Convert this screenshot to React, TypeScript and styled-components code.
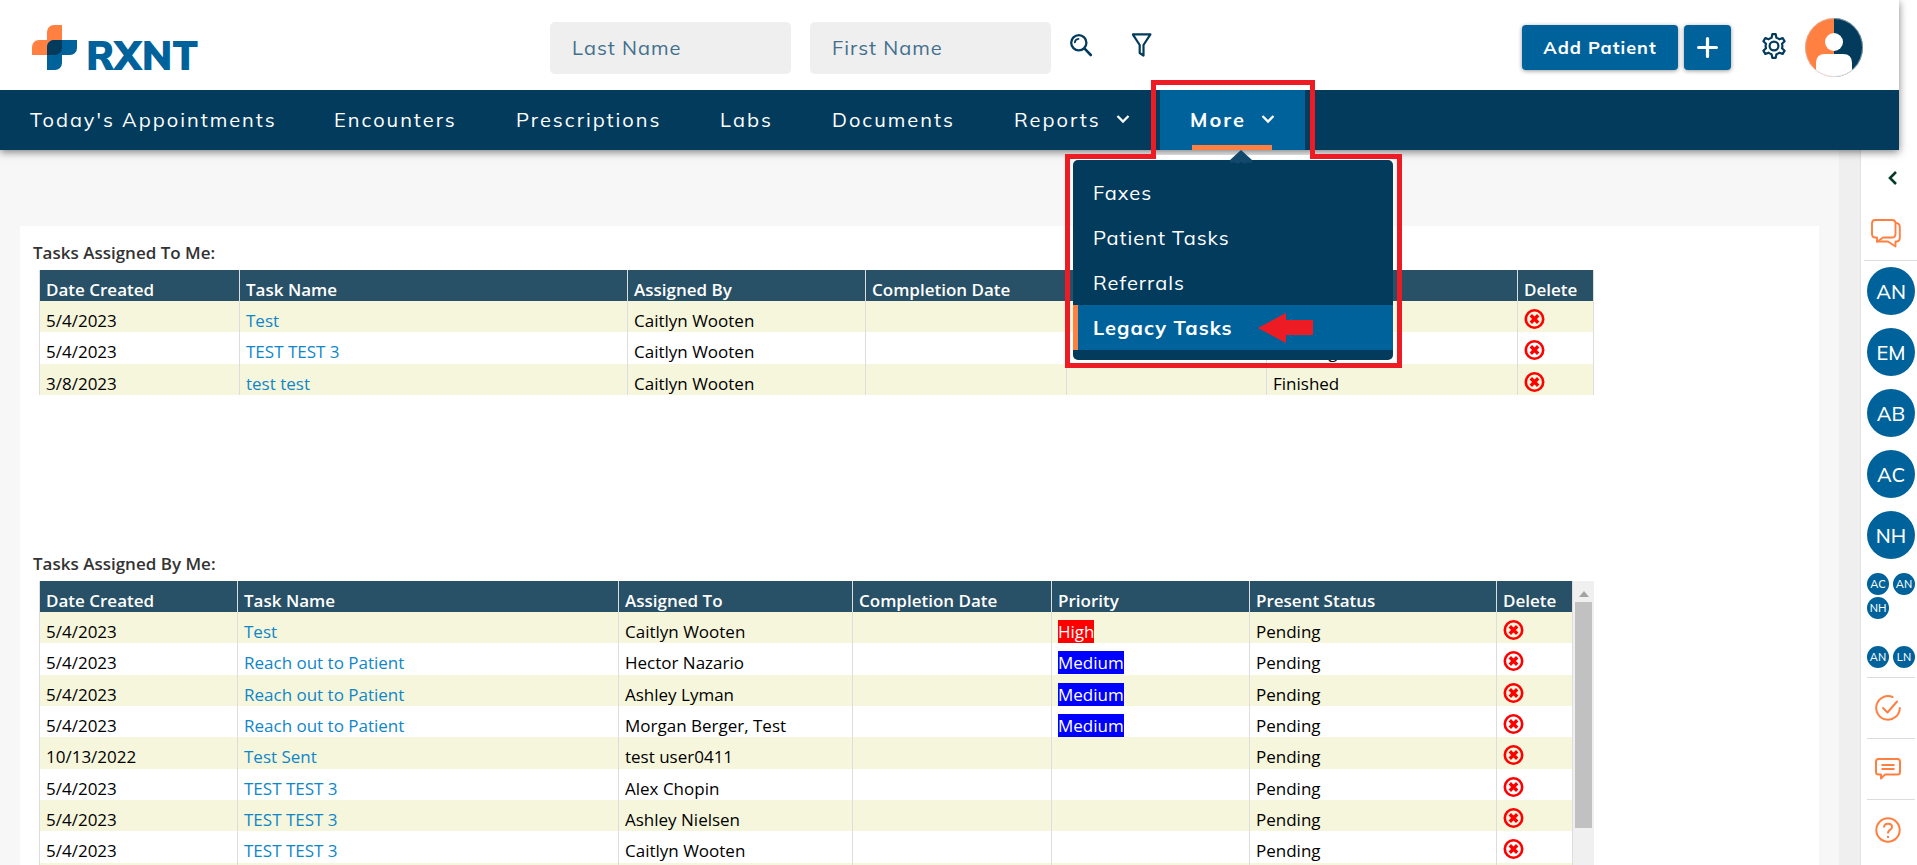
import React from "react";
import styled, { createGlobalStyle, css } from "styled-components";

const navy = "#023b5c";
const blue = "#00629b";
const orange = "#ff8041";
const red = "#ed1c24";
const uiFont = `"Mulish", "Lato", "Open Sans", sans-serif`;
const tableFont = `"Open Sans", "Noto Sans", sans-serif`;

const GlobalStyle = createGlobalStyle`
  * { box-sizing: border-box; }
  body { margin: 0; background: #fff; font-family: ${uiFont}; overflow: hidden; }
  button, input { font: inherit; }
  button { border: 0; padding: 0; background: none; cursor: pointer; }
  a { text-decoration: none; }
  svg { display: block; }
`;

const Page = styled.div`
  display: flex;
  flex-direction: column;
  height: 100vh;
  overflow: hidden;
`;

const Header = styled.header`
  position: relative;
  z-index: 2;
  margin-right: 18px;
  box-shadow: 0 2px 8px rgba(0, 0, 0, 0.5);
`;

const TopBar = styled.div`
  display: flex;
  align-items: center;
  height: 90px;
  padding-right: 36px;
  background: #fff;
`;

const Brand = styled.a`
  display: flex;
  align-items: flex-start;
  gap: 8px;
  flex: 0 0 550px;
  height: 45px;
  padding-left: 32px;
  margin-top: 5px;
  color: ${blue};
`;

const BrandName = styled.span`
  padding-top: 10px;
  font-size: 40px;
  line-height: 40px;
  font-weight: 900;
`;

const Search = styled.form`
  display: flex;
  align-items: center;
  gap: 19px;
  padding-top: 6px;
`;

const SearchInput = styled.input`
  width: 241px;
  height: 52px;
  padding: 0 22px 2px;
  border: 0;
  border-radius: 5px;
  background: #efefef;
  color: ${navy};
  font-size: 20px;
  letter-spacing: 1px;
  &::placeholder { color: #43708d; opacity: 1; }
`;

const IconButton = styled.button`
  display: flex;
  align-items: center;
  justify-content: center;
  color: ${navy};
`;

const SearchIcons = styled.div`
  display: flex;
  gap: 39px;
  padding-bottom: 6px;
`;

const Actions = styled.div`
  display: flex;
  align-items: center;
  margin-left: auto;
  padding-top: 5px;
`;

const PrimaryButton = styled.button<{ $square?: boolean }>`
  display: flex;
  align-items: center;
  justify-content: center;
  width: ${(p) => (p.$square ? 47 : 156)}px;
  height: 45px;
  margin-left: 6px;
  border-radius: 4px;
  background: ${blue};
  box-shadow: 0 1px 4px rgba(0, 0, 0, 0.4);
  color: #fff;
  font-size: 18px;
  font-weight: 700;
  letter-spacing: 1px;
`;

const GearButton = styled(IconButton)`
  margin: 0 18px 4px 30px;
`;

const Nav = styled.nav`
  display: flex;
  height: 60px;
  background: ${navy};
`;

const NavItem = styled.a<{ $width: number; $active?: boolean }>`
  position: relative;
  display: flex;
  align-items: center;
  gap: 15px;
  width: ${(p) => p.$width}px;
  padding: 0 0 2px 30px;
  color: #fff;
  font-size: 20px;
  font-weight: 400;
  letter-spacing: 2px;
  white-space: nowrap;
  ${(p) =>
    p.$active &&
    css`
      background: ${blue};
      font-weight: 700;
      &::after {
        content: "";
        position: absolute;
        left: 32px;
        bottom: 0;
        width: 80px;
        height: 5px;
        background: ${orange};
      }
    `}
`;

const MoreGroup = styled.div`
  position: relative;
  display: flex;
`;

const Menu = styled.div`
  position: absolute;
  top: 70px;
  left: -87px;
  width: 320px;
  padding: 10px 0;
  border-radius: 5px;
  background: ${navy};
  box-shadow: 0 -5px 0 #fff;
`;

const MenuItem = styled.a<{ $active?: boolean }>`
  display: flex;
  align-items: center;
  height: 45px;
  padding-left: ${(p) => (p.$active ? 15 : 20)}px;
  border-left: ${(p) => (p.$active ? `5px solid ${orange}` : "0")};
  background: ${(p) => (p.$active ? blue : "transparent")};
  color: #fff;
  font-size: 20px;
  font-weight: ${(p) => (p.$active ? 700 : 400)};
  letter-spacing: 1px;
`;

const MenuCaret = styled.svg`
  position: absolute;
  top: 60px;
  left: 69px;
`;

const Outline = styled.svg`
  position: absolute;
  top: -10px;
  left: -95px;
  pointer-events: none;
`;

const Body = styled.div`
  display: flex;
  flex: 1;
  min-height: 0;
`;

const Main = styled.main`
  flex: 1;
  min-width: 0;
  padding: 76px 20px 0;
  background: #f7f7f7;
  overflow: hidden;
`;

const PageTrack = styled.div`
  width: 22px;
  background: #efefef;
  border-right: 1px solid #e2e2e2;
`;

const Card = styled.div`
  height: 100%;
  padding: 15px 225px 0 13px;
  background: #fff;
  overflow: hidden;
`;

const Section = styled.section`
  min-height: 311px;
`;

const Title = styled.h2`
  margin: 0;
  padding-bottom: 5px;
  color: #333;
  font: 600 17px/24px ${tableFont};
`;

const TableWrap = styled.div<{ $minHeight: number }>`
  display: flex;
  min-height: ${(p) => p.$minHeight}px;
  margin-left: 6px;
`;

const Table = styled.table`
  flex: 1;
  width: 100%;
  table-layout: fixed;
  border-collapse: collapse;
  font: 400 17px/23px ${tableFont};
  color: #000;
  th, td {
    height: 31px;
    padding: 8px 6px 0;
    border: solid #ddd;
    border-width: 0 1px;
    text-align: left;
    white-space: nowrap;
    line-height: 23px;
    vertical-align: top;
  }
  th { background: #285066; color: #fff; font-weight: 600; }
  tbody tr:nth-child(odd) { background: #f6f6dc; }
`;

const TaskLink = styled.a`
  color: #0f86c8;
`;

const Priority = styled.span<{ $level: string }>`
  display: inline-block;
  background: ${(p) => (p.$level === "High" ? "#f00" : "#00f")};
  color: #fff;
`;

const DeleteButton = styled.button`
  display: block;
`;

const ScrollTrack = styled.div`
  display: flex;
  flex-direction: column;
  align-items: center;
  gap: 5px;
  width: 21px;
  padding-top: 9px;
  background: #f0f0f0;
`;

const ScrollThumb = styled.div`
  width: 17px;
  height: 226px;
  background: #c1c1c1;
`;

const Side = styled.aside`
  display: flex;
  flex-direction: column;
  align-items: center;
  width: 56px;
  padding: 0 2px 0 6px;
  background: #fff;
`;

const CollapseButton = styled(IconButton)`
  align-self: flex-end;
  margin: 21px 18px 33px 0;
`;

const SideButton = styled(IconButton)`
  width: 48px;
  height: 61px;
  padding-right: 6px;
  border-top: 1px solid #ddd;
  color: ${orange};
`;

const ChatButton = styled(IconButton)`
  align-self: flex-end;
  width: 53px;
  height: 43px;
  margin-right: -2px;
  padding: 0 9px 12px 0;
  border-bottom: 1px solid #ddd;
  color: ${orange};
`;

const People = styled.div`
  display: flex;
  flex-direction: column;
  gap: 13px;
  padding: 6px 0 14px;
`;

const Person = styled.button<{ $small?: boolean }>`
  width: ${(p) => (p.$small ? 22 : 48)}px;
  height: ${(p) => (p.$small ? 22 : 48)}px;
  border-radius: 50%;
  background: ${blue};
  color: #fff;
  font-size: ${(p) => (p.$small ? 11 : 20)}px;
  font-weight: 500;
`;

const Group = styled.div<{ $tall?: boolean }>`
  display: flex;
  flex-wrap: wrap;
  align-content: flex-start;
  gap: 2px 4px;
  width: 48px;
  height: ${(p) => (p.$tall ? 73 : 31)}px;
`;

const Chevron = () => (
  <svg width="14" height="10" viewBox="0 0 14 10" fill="none" stroke="#fff" strokeWidth="2.300">
    <path d="M1.500 2 L7 7.500 L12.500 2" />
  </svg>
);

const Logo = () => (
  <svg width="46" height="45" viewBox="0 0 46 45">
    <path d="M22 0 H30 V23 H23 V30 H0 V22 A7 7 0 0 1 7 15 H15 V7 A7 7 0 0 1 22 0Z" fill={orange} />
    <path d="M22 15 H45 V23 A7 7 0 0 1 38 30 H30 V38 A7 7 0 0 1 23 45 H15 V22 A7 7 0 0 1 22 15Z" fill={blue} />
    <path d="M22 15 H30 V23 A7 7 0 0 1 23 30 H15 V22 A7 7 0 0 1 22 15Z" fill={navy} />
  </svg>
);

const MagnifierIcon = () => (
  <svg width="23" height="23" viewBox="0 0 23 23" fill="none" stroke="currentColor" strokeLinecap="round">
    <circle cx="8.800" cy="8.800" r="7.600" strokeWidth="2.300" />
    <path d="M4.800 8.300 A4.200 4.200 0 0 1 8.500 4.800" strokeWidth="1.800" />
    <path d="M14.600 14.600 L20.800 21" strokeWidth="2.600" />
  </svg>
);

const FunnelIcon = () => (
  <svg width="20" height="24" viewBox="0 0 20 24" fill="none" stroke="currentColor" strokeWidth="2.200" strokeLinejoin="round">
    <path d="M0.800 1.400 H18.400 L11.500 12 V22.600 L7.700 20 V12Z" />
  </svg>
);

const PlusIcon = () => (
  <svg width="21" height="21" viewBox="0 0 21 21" stroke="#fff" strokeWidth="3.200" strokeLinecap="round">
    <path d="M10.500 1.600 V19.400 M1.600 10.500 H19.400" />
  </svg>
);

const GearIcon = () => (
  <svg width="26" height="26" viewBox="0 0 26 26" fill="none" stroke="currentColor" strokeWidth="2.200" strokeLinejoin="round">
    <circle cx="13" cy="13" r="4.400" />
    <path d="M11.300 1.200 H14.700 L15.400 4.700 Q17.100 5.200 18.300 6.300 L21.700 5.100 L23.600 8.300 L21 10.700 Q21.800 13 21 15.300 L23.600 17.700 L21.700 20.900 L18.300 19.700 Q17.100 20.800 15.400 21.300 L14.700 24.800 H11.300 L10.600 21.300 Q8.900 20.800 7.700 19.700 L4.300 20.900 L2.400 17.700 L5 15.300 Q4.200 13 5 10.700 L2.400 8.300 L4.300 5.100 L7.700 6.300 Q8.900 5.200 10.600 4.700Z" />
  </svg>
);

const Avatar = () => (
  <svg width="58" height="60" viewBox="0 0 58 60">
    <defs>
      <clipPath id="avatar-clip"><ellipse cx="29" cy="29.500" rx="29" ry="29.500" /></clipPath>
    </defs>
    <g clipPath="url(#avatar-clip)">
      <rect width="29" height="60" fill={orange} />
      <rect x="29" width="29" height="60" fill={navy} />
      <path d="M11 60 V45 Q11 36 20 36 H38 Q47 36 47 45 V60Z" fill="#fff" />
      <circle cx="29" cy="24" r="9" fill="#fff" />
    </g>
    <ellipse cx="29" cy="29.500" rx="28.500" ry="29" fill="none" stroke="#ccc" strokeWidth="0.600" />
  </svg>
);

const DeleteIcon = () => (
  <svg width="21" height="20" viewBox="0 0 21 20" fill="none" stroke="#f00">
    <circle cx="10.500" cy="10" r="8.700" strokeWidth="2.600" />
    <path d="M6.800 6.300 L14.200 13.700 M14.200 6.300 L6.800 13.700" strokeWidth="3.400" />
  </svg>
);

const ChatIcon = () => (
  <svg width="30" height="29" viewBox="0 0 30 29" fill="none" stroke="currentColor" strokeWidth="1.900" strokeLinejoin="round">
    <path d="M4 1 H21 Q24.500 1 24.500 4.500 V15 Q24.500 18.500 21 18.500 H12 L6 23 V18.500 H4 Q1 18.500 1 15 V4.500 Q1 1 4 1Z" />
    <path d="M25 4 Q28.800 4.500 28.800 8 V19 Q28.800 22 26 22.500 H24.500 V27.500 L17 22.500 H7.500" />
  </svg>
);

const CheckIcon = () => (
  <svg width="26" height="26" viewBox="0 0 26 26" fill="none" stroke="currentColor" strokeWidth="2" strokeLinecap="round" strokeLinejoin="round">
    <path d="M17.500 2 A11.800 11.800 0 1 0 24.800 13" />
    <path d="M8 13 L12.500 17.500 L22 6.500" />
  </svg>
);

const CommentIcon = () => (
  <svg width="26" height="22" viewBox="0 0 26 22" fill="none" stroke="currentColor" strokeWidth="2" strokeLinejoin="round">
    <path d="M3.500 1 H22.500 Q25 1 25 3.500 V14 Q25 16.500 22.500 16.500 H10 L6 20.500 V16.500 H3.500 Q1 16.500 1 14 V3.500 Q1 1 3.500 1Z" />
    <path d="M6.500 7 H19.500 M6.500 11 H19.500" />
  </svg>
);

const HelpIcon = () => (
  <svg width="26" height="26" viewBox="0 0 26 26" fill="none" stroke="currentColor" strokeWidth="2">
    <circle cx="13" cy="13" r="11.700" />
    <path d="M9 10.500 Q9 6.800 13 6.800 Q17 6.800 17 10 Q17 12 14.800 13 Q13 13.900 13 16.500" />
    <path d="M13 18.700 V21" />
  </svg>
);

const Annotation = () => (
  <Outline width="340" height="300" viewBox="0 0 340 300" fill="none">
    <path d="M2.500 76.500 H88.500 V2.500 H247.500 V76.500 H334.500 V285.500 H2.500Z" stroke={red} strokeWidth="5" />
    <path d="M193 248 L221 233 V240 H248 V255 H221 V263Z" fill={red} />
  </Outline>
);

type Task = { date: string; name: string; person: string; priority?: string; status: string };

const toMe: Task[] = [
  { date: "5/4/2023", name: "Test", person: "Caitlyn Wooten", status: "Pending" },
  { date: "5/4/2023", name: "TEST TEST 3", person: "Caitlyn Wooten", status: "Pending" },
  { date: "3/8/2023", name: "test test", person: "Caitlyn Wooten", status: "Finished" },
];

const byMe: Task[] = [
  { date: "5/4/2023", name: "Test", person: "Caitlyn Wooten", priority: "High", status: "Pending" },
  { date: "5/4/2023", name: "Reach out to Patient", person: "Hector Nazario", priority: "Medium", status: "Pending" },
  { date: "5/4/2023", name: "Reach out to Patient", person: "Ashley Lyman", priority: "Medium", status: "Pending" },
  { date: "5/4/2023", name: "Reach out to Patient", person: "Morgan Berger, Test", priority: "Medium", status: "Pending" },
  { date: "10/13/2022", name: "Test Sent", person: "test user0411", status: "Pending" },
  { date: "5/4/2023", name: "TEST TEST 3", person: "Alex Chopin", status: "Pending" },
  { date: "5/4/2023", name: "TEST TEST 3", person: "Ashley Nielsen", status: "Pending" },
  { date: "5/4/2023", name: "TEST TEST 3", person: "Caitlyn Wooten", status: "Pending" },
  { date: "", name: "", person: "", status: "" },
];

const Col = styled.col<{ $width?: number }>`
  width: ${(p) => (p.$width ? `${p.$width}px` : "auto")};
`;

type TableProps = { tasks: Task[]; personLabel: string; widths: (number | undefined)[] };

const TaskTable = ({ tasks, personLabel, widths }: TableProps) => (
  <Table>
    <colgroup>
      {widths.map((w, i) => <Col key={i} $width={w} />)}
    </colgroup>
    <thead>
      <tr>
        <th>Date Created</th>
        <th>Task Name</th>
        <th>{personLabel}</th>
        <th>Completion Date</th>
        <th>Priority</th>
        <th>Present Status</th>
        <th>Delete</th>
      </tr>
    </thead>
    <tbody>
      {tasks.map((t, i) => (
        <tr key={i}>
          <td>{t.date}</td>
          <td>{t.name && <TaskLink href="#task">{t.name}</TaskLink>}</td>
          <td>{t.person}</td>
          <td />
          <td>{t.priority && <Priority $level={t.priority}>{t.priority}</Priority>}</td>
          <td>{t.status}</td>
          <td>{t.date && <DeleteButton aria-label="Delete task"><DeleteIcon /></DeleteButton>}</td>
        </tr>
      ))}
    </tbody>
  </Table>
);

const navItems = [
  { label: "Today's Appointments", width: 304 },
  { label: "Encounters", width: 182 },
  { label: "Prescriptions", width: 204 },
  { label: "Labs", width: 112 },
  { label: "Documents", width: 182 },
];

export default function App() {
  return (
    <Page>
      <GlobalStyle />
      <Header>
        <TopBar>
          <Brand href="#home">
            <Logo />
            <BrandName>RXNT</BrandName>
          </Brand>
          <Search>
            <SearchInput placeholder="Last Name" aria-label="Last Name" />
            <SearchInput placeholder="First Name" aria-label="First Name" />
            <SearchIcons>
              <IconButton type="button" aria-label="Search"><MagnifierIcon /></IconButton>
              <IconButton type="button" aria-label="Filter"><FunnelIcon /></IconButton>
            </SearchIcons>
          </Search>
          <Actions>
            <PrimaryButton>Add Patient</PrimaryButton>
            <PrimaryButton $square aria-label="Add"><PlusIcon /></PrimaryButton>
            <GearButton aria-label="Settings"><GearIcon /></GearButton>
            <IconButton aria-label="Account"><Avatar /></IconButton>
          </Actions>
        </TopBar>
        <Nav>
          {navItems.map((n) => (
            <NavItem key={n.label} href="#nav" $width={n.width}>{n.label}</NavItem>
          ))}
          <NavItem href="#reports" $width={176}>Reports <Chevron /></NavItem>
          <MoreGroup>
            <NavItem href="#more" $width={145} $active>More <Chevron /></NavItem>
            <Menu>
              <MenuItem href="#faxes">Faxes</MenuItem>
              <MenuItem href="#patient-tasks">Patient Tasks</MenuItem>
              <MenuItem href="#referrals">Referrals</MenuItem>
              <MenuItem href="#legacy" $active>Legacy Tasks</MenuItem>
            </Menu>
            <MenuCaret width="24" height="14" viewBox="0 0 24 14">
              <path d="M12 0 L23 10 V12 Q21 14 19 12 Q16 15 12 12 Q8 15 5 12 Q3 14 1 12 V10Z" fill="#12486b" />
            </MenuCaret>
            <Annotation />
          </MoreGroup>
        </Nav>
      </Header>
      <Body>
        <Main>
          <Card>
            <Section>
              <Title>Tasks Assigned To Me:</Title>
              <TableWrap $minHeight={125}>
                <TaskTable tasks={toMe} personLabel="Assigned By" widths={[200, undefined, 238, 201, 200, 251, 76]} />
              </TableWrap>
            </Section>
            <Section>
              <Title>Tasks Assigned By Me:</Title>
              <TableWrap $minHeight={313}>
                <TaskTable tasks={byMe} personLabel="Assigned To" widths={[198, undefined, 234, 199, 198, 247, 76]} />
                <ScrollTrack>
                  <svg width="10" height="7" viewBox="0 0 10 7"><path d="M0 7 L5 1 L10 7Z" fill="#a3a3a3" /></svg>
                  <ScrollThumb />
                </ScrollTrack>
              </TableWrap>
            </Section>
          </Card>
        </Main>
        <PageTrack />
        <Side>
          <CollapseButton aria-label="Collapse panel">
            <svg width="9" height="14" viewBox="0 0 9 14" fill="none" stroke="#063b2c" strokeWidth="2.600"><path d="M8 1 L2 7 L8 13" /></svg>
          </CollapseButton>
          <ChatButton aria-label="Messages"><ChatIcon /></ChatButton>
          <People>
            {["AN", "EM", "AB", "AC", "NH"].map((p) => <Person key={p}>{p}</Person>)}
          </People>
          <Group $tall>
            {["AC", "AN", "NH"].map((p) => <Person key={p} $small>{p}</Person>)}
          </Group>
          <Group>
            {["AN", "LN"].map((p) => <Person key={p} $small>{p}</Person>)}
          </Group>
          <SideButton aria-label="Tasks"><CheckIcon /></SideButton>
          <SideButton aria-label="Comments"><CommentIcon /></SideButton>
          <SideButton aria-label="Help"><HelpIcon /></SideButton>
        </Side>
      </Body>
    </Page>
  );
}
